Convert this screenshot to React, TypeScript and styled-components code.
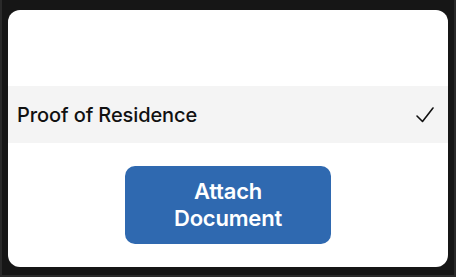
import React from 'react';
import styled, { createGlobalStyle } from 'styled-components';

const GlobalStyle = createGlobalStyle`
  html, body {
    margin: 0;
    padding: 0;
    background: #1c1c1c;
  }
  body {
    font-family: Inter, "Liberation Sans", sans-serif;
  }
`;

const Screen = styled.div`
  width: 456px;
  height: 277px;
  box-sizing: border-box;
  padding: 10px 8px 10px 8px;
  background: #161616;
  border: 2px solid #2a2a2a;
  border-top: none;
`;

const Card = styled.div`
  width: 440px;
  height: 257px;
  margin-left: -2px;
  background: #ffffff;
  border-radius: 12px;
  display: flex;
  flex-direction: column;
  padding-top: 76px;
  box-sizing: border-box;
  overflow: hidden;
`;

const Row = styled.div`
  height: 57px;
  background: #f4f4f4;
  display: flex;
  align-items: center;
  justify-content: space-between;
  padding: 0 13px 0 9px;
`;

const Label = styled.span`
  font-size: 20px;
  font-weight: 500;
  color: #111111;
  letter-spacing: -0.1px;
`;

const Footer = styled.div`
  display: flex;
  justify-content: center;
  padding-top: 23px;
`;

const AttachButton = styled.button`
  width: 206px;
  height: 78px;
  border: none;
  border-radius: 10px;
  background: #2f69b0;
  color: #ffffff;
  font-family: Inter, "Liberation Sans", sans-serif;
  font-size: 22px;
  font-weight: 600;
  line-height: 27px;
  letter-spacing: -0.2px;
  padding: 0;
  cursor: pointer;
`;

const Check = () => (
  <svg width="20" height="18" viewBox="0 0 20 18" fill="none">
    <path d="M2 10 L7.5 15.5 L18 2" stroke="#111" strokeWidth="1.6" strokeLinecap="round" strokeLinejoin="round" />
  </svg>
);

const App: React.FC = () => {
  return (
    <>
      <GlobalStyle />
      <Screen>
        <Card>
          <Row>
            <Label>Proof of Residence</Label>
            <Check />
          </Row>
          <Footer>
            <AttachButton>
              Attach
              <br />
              Document
            </AttachButton>
          </Footer>
        </Card>
      </Screen>
    </>
  );
};

export default App;
